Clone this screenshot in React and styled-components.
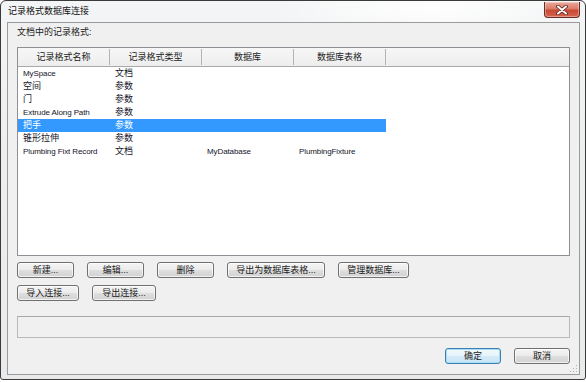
import React from 'react';
import styled, { createGlobalStyle, css } from 'styled-components';

const GlobalStyle = createGlobalStyle`
  html, body {
    margin: 0;
    padding: 0;
    background: #ffffff;
  }
  body {
    font-family: "Liberation Sans", "Noto Sans CJK SC", sans-serif;
    color: #000;
  }
`;

const Window = styled.div`
  box-sizing: border-box;
  width: 586px;
  height: 380px;
  border: 1px solid #3a3a3a;
  border-radius: 6px 6px 3px 3px;
  padding: 0 5px 4px 6px;
  display: flex;
  flex-direction: column;
  background:
    radial-gradient(ellipse 160px 30px at 430px 8px, rgba(255,255,255,0.9), rgba(255,255,255,0) 100%),
    linear-gradient(#f4f5f6, #eceef0 40%, #e9eaec);
  overflow: hidden;
`;

const TitleBar = styled.div`
  height: 21px;
  display: flex;
  justify-content: space-between;
  align-items: flex-start;
  flex-shrink: 0;
`;

const Title = styled.div`
  padding-left: 1px;
  font-size: 9px;
  line-height: 21px;
  color: #111;
`;

const CloseButton = styled.div`
  box-sizing: border-box;
  width: 36px;
  height: 16px;
  margin-top: 1px;
  border: 1px solid #6b2a22;
  border-top: none;
  border-radius: 0 0 4px 4px;
  background: linear-gradient(#e9a99b 0%, #dc7b69 45%, #c84a35 55%, #d6654f 100%);
  box-shadow: inset 0 0 0 1px rgba(255,255,255,0.35);
  display: flex;
  align-items: center;
  justify-content: center;
`;

const Client = styled.div`
  position: relative;
  flex: 1;
  border: 1px solid #9a9a9a;
  background: #f0f0f0;
  padding: 3px 9px 0 9px;
  display: flex;
  flex-direction: column;
`;

const Label = styled.div`
  height: 12px;
  font-size: 9px;
  line-height: 12px;
  color: #222;
`;

const ListBox = styled.div`
  box-sizing: border-box;
  margin-top: 9px;
  height: 209px;
  border: 1px solid #8e9096;
  background: #fff;
`;

const Header = styled.div`
  display: flex;
  height: 18px;
  border-bottom: 1px solid #a9a9a9;
  background: linear-gradient(#f7f7f7, #ededed);
`;

const HeadCell = styled.div`
  box-sizing: border-box;
  width: 92px;
  margin: 1px 0;
  border-right: 1px solid #b3b3b3;
  font-size: 9px;
  line-height: 16px;
  text-align: center;
  color: #222;
`;

const Row = styled.div`
  display: flex;
  width: 368px;
  height: 13px;
  ${({ selected }) => selected && css`
    background: #3399ff;
    color: #fff;
  `}
`;

const Cell = styled.div`
  box-sizing: border-box;
  width: 92px;
  padding-left: 5px;
  white-space: nowrap;
  overflow: hidden;
  font-size: ${({ latin }) => (latin ? '8px' : '9px')};
  letter-spacing: ${({ latin }) => (latin ? '-0.1px' : '0')};
  line-height: 13px;
  color: ${({ selected }) => (selected ? '#fff' : '#14142a')};
`;

const ButtonRow = styled.div`
  display: flex;
  gap: 13px;
  margin-top: ${({ top }) => top}px;
  justify-content: ${({ end }) => (end ? 'flex-end' : 'flex-start')};
`;

const Button = styled.button`
  box-sizing: border-box;
  width: ${({ w }) => w}px;
  height: 16px;
  padding: 0;
  border: 1px solid #707070;
  border-radius: 3px;
  background: linear-gradient(#f4f4f4 0%, #ececec 48%, #dedede 52%, #d2d2d2 100%);
  box-shadow: inset 0 0 0 1px rgba(255,255,255,0.7);
  font-family: "Liberation Sans", "Noto Sans CJK SC", sans-serif;
  font-size: 9px;
  line-height: 14px;
  color: #1a1a1a;
  ${({ primary }) => primary && css`
    border-color: #3c7fb1;
    background: linear-gradient(#f2f9fd 0%, #e6f3fb 48%, #d4ebf8 52%, #c9e5f6 100%);
    box-shadow: inset 0 0 0 1px #a8dcf6;
  `}
`;

const StatusBox = styled.div`
  box-sizing: border-box;
  margin-top: 15px;
  height: 22px;
  border: 1px solid #b9b9b9;
  border-top-color: #a8a8a8;
  background: #f0f0f0;
`;

const Grip = styled.svg`
  position: absolute;
  right: 1px;
  bottom: 1px;
`;

const columns = ['记录格式名称', '记录格式类型', '数据库', '数据库表格'];

const records = [
  ['MySpace', '文档', '', ''],
  ['空间', '参数', '', ''],
  ['门', '参数', '', ''],
  ['Extrude Along Path', '参数', '', ''],
  ['把手', '参数', '', '', true],
  ['锥形拉伸', '参数', '', ''],
  ['Plumbing Fixt Record', '文档', 'MyDatabase', 'PlumbingFixture'],
];

const isLatin = (s) => /^[\x00-\x7f]*$/.test(s);

export default function App() {
  return (
    <>
      <GlobalStyle />
      <Window>
        <TitleBar>
          <Title>记录格式数据库连接</Title>
          <CloseButton>
            <svg width="12" height="10" viewBox="0 0 12 10">
              <path d="M2 1.5 L10 8.5 M10 1.5 L2 8.5" stroke="#5a2018" strokeWidth="3.6" strokeLinecap="round" />
              <path d="M2 1.5 L10 8.5 M10 1.5 L2 8.5" stroke="#ffffff" strokeWidth="2" strokeLinecap="round" />
            </svg>
          </CloseButton>
        </TitleBar>
        <Client>
          <Label>文档中的记录格式:</Label>
          <ListBox>
            <Header>
              {columns.map((c) => (
                <HeadCell key={c}>{c}</HeadCell>
              ))}
            </Header>
            {records.map(([name, type, db, table, selected]) => (
              <Row key={name} selected={selected}>
                {[name, type, db, table].map((v, i) => (
                  <Cell key={i} latin={v !== '' && isLatin(v)} selected={selected}>
                    {v}
                  </Cell>
                ))}
              </Row>
            ))}
          </ListBox>
          <ButtonRow top={6}>
            <Button w={57}>新建...</Button>
            <Button w={57}>编辑...</Button>
            <Button w={57}>删除</Button>
            <Button w={98}>导出为数据库表格...</Button>
            <Button w={71}>管理数据库...</Button>
          </ButtonRow>
          <ButtonRow top={7}>
            <Button w={62}>导入连接...</Button>
            <Button w={64}>导出连接...</Button>
          </ButtonRow>
          <StatusBox />
          <ButtonRow top={10} end>
            <Button w={56} primary>确定</Button>
            <Button w={56}>取消</Button>
          </ButtonRow>
          <Grip width="9" height="9" viewBox="0 0 9 9">
            {[[7, 1], [4, 4], [7, 4], [1, 7], [4, 7], [7, 7]].map(([x, y]) => (
              <rect key={`${x}-${y}`} x={x} y={y} width="1" height="1" fill="#b0b0b0" />
            ))}
          </Grip>
        </Client>
      </Window>
    </>
  );
}
